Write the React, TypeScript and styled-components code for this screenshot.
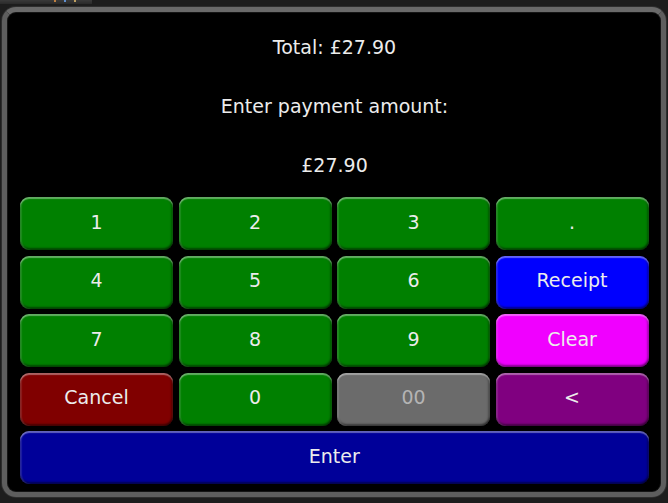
import * as React from 'react';
import styled, { createGlobalStyle } from 'styled-components';

const GlobalStyle = createGlobalStyle`
  html, body {
    margin: 0;
    padding: 0;
    background: #1d1d1d;
  }
  body {
    font-family: "DejaVu Sans", Tahoma, sans-serif;
  }
`;

const Page = styled.div`
  width: 668px;
  height: 503px;
  display: flex;
  flex-direction: column;
  overflow: hidden;
`;

const TitleStrip = styled.div`
  height: 7px;
  display: flex;
  align-items: flex-start;
  flex-shrink: 0;
`;

const Tab = styled.div`
  width: 92px;
  height: 4px;
  background: linear-gradient(#3a3a3a, #2a2a2a);
  display: flex;
  gap: 8px;
  padding-left: 54px;
  box-sizing: border-box;
`;

const Dot = styled.span<{ $c: string }>`
  width: 2px;
  height: 2px;
  background: ${(p) => p.$c};
`;

const Frame = styled.div`
  margin: 0 2px;
  height: 490px;
  box-sizing: border-box;
  border: 5px solid #5e5e5e;
  border-top-color: #6a6a6a;
  border-radius: 14px;
  background: #000;
  box-shadow: inset 0 0 0 1px #151515, 0 0 0 1px #2e2e2e;
  padding: 5px 12px 0 13px;
  display: flex;
  flex-direction: column;
`;

const InfoLine = styled.div`
  height: 59px;
  display: flex;
  align-items: center;
  justify-content: center;
  color: #ececec;
  font-size: 19px;
`;

const Keypad = styled.div`
  display: grid;
  grid-template-columns: repeat(4, 153px);
  grid-auto-rows: 53px;
  column-gap: 5.5px;
  row-gap: 5.5px;
  margin-top: 3px;
`;

const Key = styled.button<{ $bg: string; $fg?: string; $wide?: boolean }>`
  grid-column: ${(p) => (p.$wide ? '1 / -1' : 'auto')};
  border: none;
  margin: 0;
  padding: 0 0 4px;
  border-radius: 9px;
  background: ${(p) => p.$bg};
  color: ${(p) => p.$fg || '#ececec'};
  font-family: inherit;
  font-size: 19px;
  box-shadow:
    inset 0 2px 1px rgba(255, 255, 255, 0.38),
    inset 2px 0 1px rgba(255, 255, 255, 0.12),
    inset 0 -2px 2px rgba(0, 0, 0, 0.45),
    inset -2px 0 2px rgba(0, 0, 0, 0.25);
  cursor: pointer;
`;

const GREEN = '#008000';

const keys: { label: string; bg: string; fg?: string }[] = [
  { label: '1', bg: GREEN },
  { label: '2', bg: GREEN },
  { label: '3', bg: GREEN },
  { label: '.', bg: GREEN },
  { label: '4', bg: GREEN },
  { label: '5', bg: GREEN },
  { label: '6', bg: GREEN },
  { label: 'Receipt', bg: '#0000fe' },
  { label: '7', bg: GREEN },
  { label: '8', bg: GREEN },
  { label: '9', bg: GREEN },
  { label: 'Clear', bg: '#f000ff' },
  { label: 'Cancel', bg: '#800000' },
  { label: '0', bg: GREEN },
  { label: '00', bg: '#6b6b6b', fg: '#b4b4b4' },
  { label: '<', bg: '#800080' },
];

const App = () => (
  <Page>
    <GlobalStyle />
    <TitleStrip>
      <Tab>
        <Dot $c="#c08040" />
        <Dot $c="#6090d0" />
        <Dot $c="#c0a060" />
      </Tab>
    </TitleStrip>
    <Frame>
      <InfoLine>Total: £27.90</InfoLine>
      <InfoLine>Enter payment amount:</InfoLine>
      <InfoLine>£27.90</InfoLine>
      <Keypad>
        {keys.map((k) => (
          <Key key={k.label} $bg={k.bg} $fg={k.fg}>
            {k.label}
          </Key>
        ))}
        <Key $bg="#000099" $wide>
          Enter
        </Key>
      </Keypad>
    </Frame>
  </Page>
);

export default App;
